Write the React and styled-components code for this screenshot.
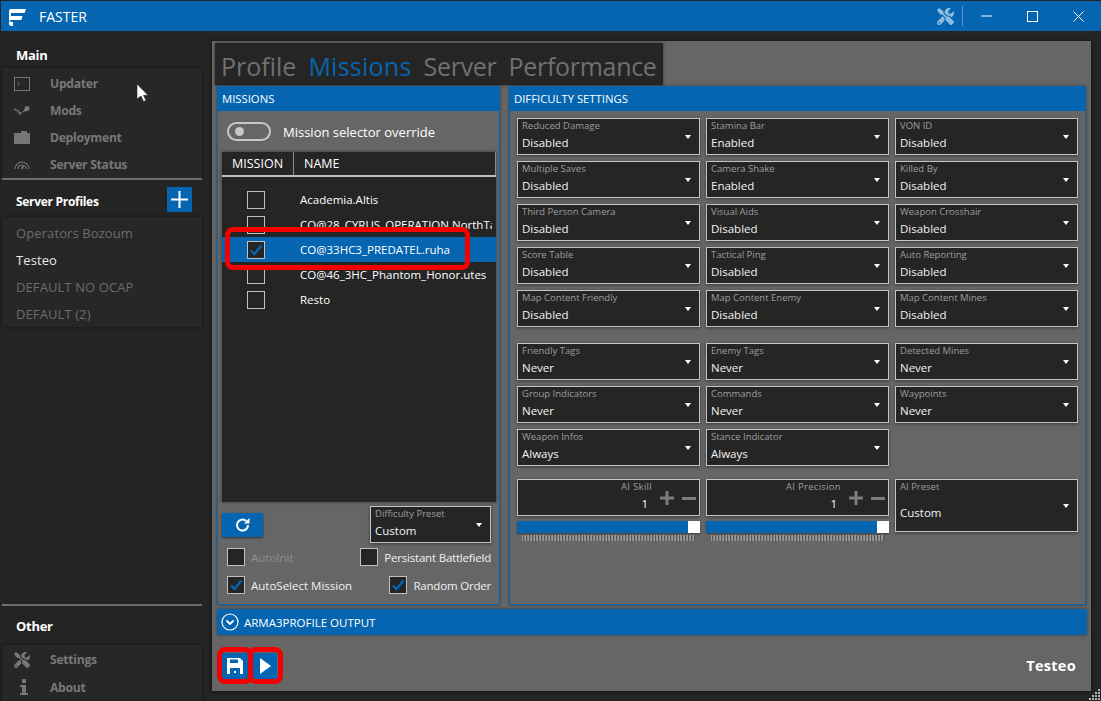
import React from 'react'
import styled, { createGlobalStyle } from 'styled-components'
import { FaTools } from 'react-icons/fa'

const BLUE = '#0565b0'
const FONT = '"Open Sans", "Noto Sans", "Liberation Sans", sans-serif'

const Global = createGlobalStyle`
  html, body { margin: 0; padding: 0; background: #242424; }
  * { box-sizing: border-box; }
  body { font-family: ${FONT}; color: #fff; }
`

const Window = styled.div`
  position: relative;
  width: 1101px;
  height: 701px;
  overflow: hidden;
  background: #242424;
  padding-top: 1px;
  display: flex;
  flex-direction: column;
`

const TitleBar = styled.div`
  height: 30px;
  flex: none;
  margin-left: 1px;
  background: ${BLUE};
  display: flex;
  align-items: center;
`

const LogoBox = styled.div`
  width: 38px;
  padding-left: 7px;
  display: flex;
`

const AppName = styled.div`
  font-size: 14px;
  flex: 1;
`

const TitleIcons = styled.div`
  display: flex;
  align-items: center;
  height: 100%;
`

const ToolIcon = styled.div`
  width: 26px;
  height: 20px;
  display: flex;
  align-items: center;
  border-right: 1px solid #5a97c9;
  color: #8fbde0;
`

const CaptionBtn = styled.div`
  width: 46px;
  height: 100%;
  display: flex;
  align-items: center;
  justify-content: center;
`

const Body = styled.div`
  flex: 1;
  display: flex;
  min-height: 0;
`

const Sidebar = styled.div`
  width: 212px;
  flex: none;
  display: flex;
  flex-direction: column;
  padding-left: 2px;
`

const SideTitle = styled.div`
  height: ${p => p.$h}px;
  padding: ${p => p.$top || 0}px 0 0 14px;
  display: flex;
  align-items: center;
  font-weight: 700;
  font-size: ${p => p.$size || 13}px;
  letter-spacing: -0.3px;
`

const SideCard = styled.div`
  width: 200px;
  background: #272727;
  box-shadow: 0 0 3px rgba(0, 0, 0, 0.55);
  padding-top: ${p => p.$pad || 1}px;
`

const NavItem = styled.div`
  height: ${p => p.$h || 27}px;
  display: flex;
  align-items: center;
  color: #777;
  font-weight: 700;
  font-size: 12.2px;
  letter-spacing: -0.3px;
`

const NavIcon = styled.span`
  width: 48px;
  padding-left: ${p => p.$left || 12}px;
  display: flex;
  align-items: center;
`

const SideRule = styled.div`
  width: 200px;
  height: 2px;
  background: #6c6c6c;
`

const ProfilesHead = styled.div`
  height: 37px;
  padding-top: 2px;
  width: 190px;
  display: flex;
  align-items: center;
  justify-content: space-between;
`

const AddBtn = styled.div`
  width: 25px;
  height: 25px;
  background: ${BLUE};
  display: flex;
  align-items: center;
  justify-content: center;
`

const ProfileItem = styled.div`
  height: 27px;
  padding-left: 14px;
  display: flex;
  align-items: center;
  font-size: 13px;
  letter-spacing: 0.1px;
  color: ${p => (p.$active ? '#e8e8e8' : '#6c6c6c')};
`

const Bottom = styled.div`
  margin-top: auto;
`

const Main = styled.div`
  width: 879px;
  height: 650px;
  margin-top: 10px;
  background: #666;
  padding: 2px 5px 0;
  display: flex;
  flex-direction: column;
  box-shadow: 0 0 4px rgba(0, 0, 0, 0.6);
`

const Tabs = styled.div`
  width: 448px;
  height: 42px;
  margin-left: -2px;
  background: #252525;
  box-shadow: 0 0 3px rgba(0, 0, 0, 0.5);
  display: flex;
  align-items: center;
  padding: 4px 0 0 6px;
  gap: 12px;
  font-size: 25px;
  flex: none;
`

const Tab = styled.span`
  color: ${p => (p.$active ? BLUE : '#707070')};
  letter-spacing: ${p => p.$ls || 0}px;
`

const Panels = styled.div`
  display: flex;
  gap: 9px;
  margin-top: 1px;
  margin-right: -1px;
  height: 519px;
  flex: none;
`

const Panel = styled.div`
  width: ${p => p.$w}px;
  border: 1px solid ${BLUE};
  border-top: 0;
  display: flex;
  flex-direction: column;
  box-shadow: 0 0 3px rgba(0, 0, 0, 0.4);
`

const PanelHead = styled.div`
  height: 25px;
  flex: none;
  margin: 0 -1px;
  background: ${BLUE};
  font-size: 11.3px;
  display: flex;
  align-items: center;
  padding-left: 5px;
`

const MissionBody = styled.div`
  flex: 1;
  padding: 0 3px 0 4px;
  display: flex;
  flex-direction: column;
`

const ToggleRow = styled.div`
  height: 41px;
  display: flex;
  align-items: center;
  padding-left: 5px;
  gap: 12px;
  font-size: 13px;
`

const Toggle = styled.div`
  width: 44px;
  height: 19px;
  border: 2px solid #c8c8c8;
  border-radius: 10px;
  padding: 3px 0 0 6px;
`

const ToggleDot = styled.div`
  width: 9px;
  height: 9px;
  border-radius: 50%;
  background: #c8c8c8;
`

const Table = styled.div`
  height: 350px;
  background: #252525;
  box-shadow: 0 0 3px rgba(0, 0, 0, 0.5);
  flex: none;
  display: flex;
  flex-direction: column;
`

const TableHead = styled.div`
  height: 25px;
  flex: none;
  display: flex;
  border-bottom: 2px solid #bdbdbd;
  font-size: 12.5px;
  align-items: stretch;
`

const HeadCell = styled.div`
  width: ${p => p.$w};
  display: flex;
  align-items: center;
  padding-left: ${p => p.$pad}px;
  border-right: 1px solid #8a8a8a;
  flex: ${p => (p.$w ? 'none' : 1)};
`

const Rows = styled.div`
  padding-top: 10px;
`

const Row = styled.div`
  height: 25px;
  display: flex;
  align-items: center;
  padding-left: 25px;
  background: ${p => (p.$selected ? BLUE : 'transparent')};
  font-size: 11.5px;
  white-space: nowrap;
`

const RowName = styled.span`
  margin-left: 35px;
  max-width: 192px;
  overflow: hidden;
`

const Box = styled.div`
  width: 18px;
  height: 18px;
  flex: none;
  border: 1px solid #c0c0c0;
  background: #252525;
  display: flex;
  align-items: center;
  justify-content: center;
`

const Controls = styled.div`
  display: flex;
  justify-content: space-between;
  margin-top: 4px;
  padding-right: 5px;
  height: 37px;
`

const RefreshBtn = styled.div`
  width: 41px;
  height: 24px;
  margin-top: 7px;
  background: ${BLUE};
  box-shadow: 0 1px 2px rgba(0, 0, 0, 0.5);
  display: flex;
  align-items: center;
  justify-content: center;
`

const OptionRow = styled.div`
  display: flex;
  justify-content: space-between;
  height: 18px;
  margin-top: ${p => p.$top}px;
  padding: 0 5px;
  font-size: 11.5px;
`

const Option = styled.div`
  display: flex;
  align-items: center;
  gap: 6px;
  white-space: nowrap;
  letter-spacing: ${p => (p.$tight ? -0.2 : 0)}px;
  color: ${p => (p.$muted ? '#8f8f8f' : '#f0f0f0')};
`

const SelectBox = styled.div`
  position: relative;
  width: ${p => p.$w || 183}px;
  height: ${p => p.$h || 37}px;
  background: #252525;
  border: 1px solid #c4c4c4;
  box-shadow: 0 1px 3px rgba(0, 0, 0, 0.45);
  padding: 1px 5px 0 4px;
`

const SelectLabel = styled.div`
  font-size: 9.5px;
  line-height: 12px;
  height: 12px;
  color: #9d9d9d;
  white-space: nowrap;
`

const SelectValue = styled.div`
  font-size: 11.5px;
  line-height: 16px;
  margin-top: ${p => p.$top || 3}px;
  color: #f2f2f2;
`

const Arrow = styled.span`
  position: absolute;
  right: 8px;
  top: ${p => p.$top || 16}px;
  width: 0;
  height: 0;
  border-left: 3px solid transparent;
  border-right: 3px solid transparent;
  border-top: 4px solid #fff;
`

const SettingsBody = styled.div`
  flex: 1;
  padding: 7px 8px 0 7px;
`

const Grid = styled.div`
  display: grid;
  grid-template-columns: repeat(3, 183px);
  column-gap: 6px;
  row-gap: 6px;
  margin-bottom: ${p => p.$bottom || 0}px;
`

const AiCol = styled.div`
  display: flex;
  flex-direction: column;
`

const NumberBox = styled.div`
  width: 183px;
  height: 37px;
  background: #252525;
  border: 1px solid #c4c4c4;
  box-shadow: 0 1px 3px rgba(0, 0, 0, 0.45);
  display: flex;
  justify-content: flex-end;
  padding-right: 3px;
`

const NumberText = styled.div`
  text-align: right;
  margin-right: 8px;
`

const NumberLabel = styled.div`
  font-size: 9.5px;
  line-height: 12px;
  margin-top: 1px;
  letter-spacing: 0.3px;
  color: #9d9d9d;
`

const NumberValue = styled.div`
  font-size: 11.5px;
  line-height: 16px;
  margin-top: 3px;
  padding-right: 4px;
`

const StepIcons = styled.div`
  display: flex;
  gap: 8px;
  align-items: center;
  height: 24px;
  margin-top: 6px;
`

const Slider = styled.div`
  height: 12px;
  margin-top: 5px;
  background: ${BLUE};
  display: flex;
  justify-content: flex-end;
  box-shadow: 0 1px 2px rgba(0, 0, 0, 0.4);
`

const Thumb = styled.div`
  width: 12px;
  height: 12px;
  background: #fff;
`

const Ticks = styled.div`
  height: 6px;
  margin: 2px 5px 0;
  background: repeating-linear-gradient(90deg, #9a9a9a 0 1px, #555 1px 2px, #8a8a8a 2px 3px);
`

const OutputBar = styled.div`
  height: 26px;
  flex: none;
  margin: 4px -1px 0 0;
  background: ${BLUE};
  display: flex;
  align-items: center;
  gap: 5px;
  padding-left: 4px;
  font-size: 11.5px;
  box-shadow: 0 0 3px rgba(0, 0, 0, 0.4);
`

const Footer = styled.div`
  flex: 1;
  display: flex;
  align-items: center;
  padding: 5px 10px 0 5px;
  gap: 5px;
`

const FootBtn = styled.div`
  width: ${p => p.$w}px;
  height: 26px;
  background: ${BLUE};
  display: flex;
  align-items: center;
  justify-content: center;
`

const ProfileName = styled.div`
  margin-left: auto;
  font-weight: 700;
  font-size: 14.5px;
  letter-spacing: 0.3px;
`

const Highlight = styled.div`
  position: absolute;
  left: ${p => p.$x}px;
  top: ${p => p.$y}px;
  width: ${p => p.$w}px;
  height: ${p => p.$h}px;
  border: 5px solid #f40000;
  border-radius: 8px;
  pointer-events: none;
`

const Cursor = styled.svg`
  position: absolute;
  left: 136px;
  top: 83px;
`

const Grip = styled.svg`
  position: absolute;
  right: 1px;
  bottom: 1px;
`

const Check = () => (
  <svg width="14" height="12" viewBox="0 0 14 12">
    <path d="M2 6.5 5.5 10 12.5 1.5" fill="none" stroke={BLUE} strokeWidth="2.4" />
  </svg>
)

const Logo = () => (
  <svg width="20" height="20" viewBox="0 0 20 20" fill="#fff">
    <path d="M1 10V5q0-2 2-2h15l-1.5 4H3v3z" />
    <path d="M1 10h13.500l-1.200 4H1z" />
    <rect x="1" y="14" width="1.6" height="2" fill="#9cc4e4" />
    <path d="M1 16h4v4H3q-2 0-2-2z" />
  </svg>
)

const TerminalIcon = () => (
  <svg width="16" height="14" viewBox="0 0 16 14" fill="none">
    <rect x="0.5" y="0.5" width="15" height="13" stroke="#777" />
    <path d="M3.5 4.5 5.5 6.5 3.5 8.5" stroke="#777" />
  </svg>
)

const SteamIcon = () => (
  <svg width="16" height="12" viewBox="0 0 16 12" fill="#777">
    <path d="M0 3l5 3 2 2 5-5 1 3-4 1-3 3-3-4-3-1z" />
    <circle cx="13" cy="3.5" r="2.5" />
  </svg>
)

const CaseIcon = () => (
  <svg width="16" height="13" viewBox="0 0 16 13" fill="#777">
    <path d="M7 2V0h6v2h3v11H0V2z" />
  </svg>
)

const GaugeIcon = () => (
  <svg width="16" height="11" viewBox="0 0 16 11" fill="none" stroke="#777" strokeWidth="1.2">
    <path d="M1 10a7 7 0 0 1 14 0" />
    <path d="M4 10a4 4 0 0 1 8 0" />
    <path d="M8 10l1-3" strokeWidth="2" />
  </svg>
)

const InfoIcon = () => (
  <svg width="8" height="16" viewBox="0 0 8 16" fill="#777">
    <rect x="2" y="0" width="4" height="4" />
    <path d="M0 6h6v8h2v2H0v-2h2V8H0z" />
  </svg>
)

const SaveIcon = () => (
  <svg width="18" height="18" viewBox="0 0 18 18" fill="#fff">
    <path fillRule="evenodd" d="M1 1h13l3 3v13H1zM4 2.5V6h8V2.5zM4 11v6h10v-6zM8 14h2v2H8z" />
  </svg>
)

const RefreshIcon = () => (
  <svg width="16" height="16" viewBox="0 0 16 16" fill="none">
    <path d="M13 8a5.5 5.5 0 1 1-1.8-4" stroke="#fff" strokeWidth="2" />
    <path d="M14.5 1v5.5H9z" fill="#fff" />
  </svg>
)

const settingsA = [
  ['Reduced Damage', 'Disabled'], ['Stamina Bar', 'Enabled'], ['VON ID', 'Disabled'],
  ['Multiple Saves', 'Disabled'], ['Camera Shake', 'Enabled'], ['Killed By', 'Disabled'],
  ['Third Person Camera', 'Disabled'], ['Visual Aids', 'Disabled'], ['Weapon Crosshair', 'Disabled'],
  ['Score Table', 'Disabled'], ['Tactical Ping', 'Disabled'], ['Auto Reporting', 'Disabled'],
  ['Map Content Friendly', 'Disabled'], ['Map Content Enemy', 'Disabled'], ['Map Content Mines', 'Disabled'],
]

const settingsB = [
  ['Friendly Tags', 'Never'], ['Enemy Tags', 'Never'], ['Detected Mines', 'Never'],
  ['Group Indicators', 'Never'], ['Commands', 'Never'], ['Waypoints', 'Never'],
  ['Weapon Infos', 'Always'], ['Stance Indicator', 'Always'],
]

const missions = [
  { name: 'Academia.Altis' },
  { name: 'CO@28_CYRUS_OPERATION.NorthTa' },
  { name: 'CO@33HC3_PREDATEL.ruha', selected: true },
  { name: 'CO@46_3HC_Phantom_Honor.utes' },
  { name: 'Resto' },
]

const gripDots = [[9, 0], [6, 3], [9, 3], [3, 6], [6, 6], [9, 6], [0, 9], [3, 9], [6, 9], [9, 9]]

const Select = ({ label, value, ...rest }) => (
  <SelectBox {...rest}>
    <SelectLabel>{label}</SelectLabel>
    <SelectValue>{value}</SelectValue>
    <Arrow />
  </SelectBox>
)

const AiNumber = ({ label }) => (
  <AiCol>
    <NumberBox>
      <NumberText>
        <NumberLabel>{label}</NumberLabel>
        <NumberValue>1</NumberValue>
      </NumberText>
      <StepIcons>
        <svg width="14" height="14" fill="#7d7d7d"><path d="M5.5 0h3v5.5H14v3H8.5V14h-3V8.5H0v-3h5.5z" /></svg>
        <svg width="14" height="3"><rect width="14" height="3" fill="#7d7d7d" /></svg>
      </StepIcons>
    </NumberBox>
    <Slider><Thumb /></Slider>
    <Ticks />
  </AiCol>
)

export default function App() {
  return (
    <Window>
      <Global />
      <TitleBar>
        <LogoBox><Logo /></LogoBox>
        <AppName>FASTER</AppName>
        <TitleIcons>
          <ToolIcon><FaTools size={17} /></ToolIcon>
          <CaptionBtn>
            <svg width="11" height="2"><rect width="11" height="1" y="0.5" fill="#fff" /></svg>
          </CaptionBtn>
          <CaptionBtn>
            <svg width="11" height="11"><rect x="0.5" y="0.5" width="10" height="10" fill="none" stroke="#fff" /></svg>
          </CaptionBtn>
          <CaptionBtn>
            <svg width="11" height="11"><path d="M0.5 0.5l10 10M10.5 0.5l-10 10" stroke="#fff" /></svg>
          </CaptionBtn>
        </TitleIcons>
      </TitleBar>
      <Body>
        <Sidebar>
          <SideTitle $h={37} $top={10}>Main</SideTitle>
          <SideCard $pad={2}>
            <NavItem><NavIcon><TerminalIcon /></NavIcon>Updater</NavItem>
            <NavItem><NavIcon><SteamIcon /></NavIcon>Mods</NavItem>
            <NavItem><NavIcon><CaseIcon /></NavIcon>Deployment</NavItem>
            <NavItem><NavIcon><GaugeIcon /></NavIcon>Server Status</NavItem>
          </SideCard>
          <SideRule />
          <ProfilesHead>
            <SideTitle $h={37} $size={12} $top={3}>Server Profiles</SideTitle>
            <AddBtn>
              <svg width="17" height="17" fill="#fff"><path d="M7.5 0h2v7.5H17v2H9.5V17h-2V9.5H0v-2h7.5z" /></svg>
            </AddBtn>
          </ProfilesHead>
          <SideCard $pad={2}>
            <ProfileItem>Operators Bozoum</ProfileItem>
            <ProfileItem $active>Testeo</ProfileItem>
            <ProfileItem>DEFAULT NO OCAP</ProfileItem>
            <ProfileItem>DEFAULT (2)</ProfileItem>
          </SideCard>
          <Bottom>
            <SideRule />
            <SideTitle $h={39}>Other</SideTitle>
            <SideCard>
              <NavItem><NavIcon><FaTools size={16} /></NavIcon>Settings</NavItem>
              <NavItem $h={28}><NavIcon $left={18}><InfoIcon /></NavIcon>About</NavItem>
            </SideCard>
          </Bottom>
        </Sidebar>
        <Main>
          <Tabs>
            <Tab>Profile</Tab>
            <Tab $active $ls={0.25}>Missions</Tab>
            <Tab $ls={-0.3}>Server</Tab>
            <Tab $ls={-0.3}>Performance</Tab>
          </Tabs>
          <Panels>
            <Panel $w={283}>
              <PanelHead>MISSIONS</PanelHead>
              <MissionBody>
                <ToggleRow>
                  <Toggle><ToggleDot /></Toggle>
                  Mission selector override
                </ToggleRow>
                <Table>
                  <TableHead>
                    <HeadCell $w="72px" $pad={10}>MISSION</HeadCell>
                    <HeadCell $pad={10}>NAME</HeadCell>
                  </TableHead>
                  <Rows>
                    {missions.map(m => (
                      <Row key={m.name} $selected={m.selected}>
                        <Box>{m.selected && <Check />}</Box>
                        <RowName>{m.name}</RowName>
                      </Row>
                    ))}
                  </Rows>
                </Table>
                <Controls>
                  <RefreshBtn><RefreshIcon /></RefreshBtn>
                  <Select label="Difficulty Preset" value="Custom" $w={121} />
                </Controls>
                <OptionRow $top={5}>
                  <Option $muted><Box />AutoInit</Option>
                  <Option $tight><Box />Persistant Battlefield</Option>
                </OptionRow>
                <OptionRow $top={10}>
                  <Option><Box><Check /></Box>AutoSelect Mission</Option>
                  <Option $tight><Box><Check /></Box>Random Order</Option>
                </OptionRow>
              </MissionBody>
            </Panel>
            <Panel $w={577}>
              <PanelHead>DIFFICULTY SETTINGS</PanelHead>
              <SettingsBody>
                <Grid $bottom={16}>
                  {settingsA.map(([l, v]) => <Select key={l} label={l} value={v} />)}
                </Grid>
                <Grid $bottom={13}>
                  {settingsB.map(([l, v]) => <Select key={l} label={l} value={v} />)}
                </Grid>
                <Grid>
                  <AiNumber label="AI Skill" />
                  <AiNumber label="AI Precision" />
                  <SelectBox $h={53}>
                    <SelectLabel>AI Preset</SelectLabel>
                    <SelectValue $top={12}>Custom</SelectValue>
                    <Arrow $top={24} />
                  </SelectBox>
                </Grid>
              </SettingsBody>
            </Panel>
          </Panels>
          <OutputBar>
            <svg width="18" height="18" viewBox="0 0 18 18" fill="none" stroke="#fff" strokeWidth="1.2">
              <circle cx="9" cy="9" r="8" />
              <path d="M5.5 7.5 9 11l3.5-3.5" strokeWidth="1.8" />
            </svg>
            ARMA3PROFILE OUTPUT
          </OutputBar>
          <Footer>
            <FootBtn $w={26}><SaveIcon /></FootBtn>
            <FootBtn $w={24}>
              <svg width="12" height="16"><path d="M1 0l11 8-11 8z" fill="#fff" /></svg>
            </FootBtn>
            <ProfileName>Testeo</ProfileName>
          </Footer>
        </Main>
      </Body>
      <Highlight $x={225} $y={227} $w={245} $h={43} />
      <Highlight $x={217} $y={647} $w={36} $h={37} />
      <Highlight $x={248} $y={647} $w={35} $h={37} />
      <Cursor width="13" height="20" viewBox="0 0 13 20">
        <path d="M1 1v15l4-3 2.5 5.5 2.5-1-2.5-5.2H12z" fill="#fff" stroke="#222" strokeWidth="0.6" />
      </Cursor>
      <Grip width="11" height="11">
        {gripDots.map(([x, y]) => <rect key={`${x}-${y}`} x={x} y={y} width="2" height="2" fill="#b5b5b5" />)}
      </Grip>
    </Window>
  )
}
